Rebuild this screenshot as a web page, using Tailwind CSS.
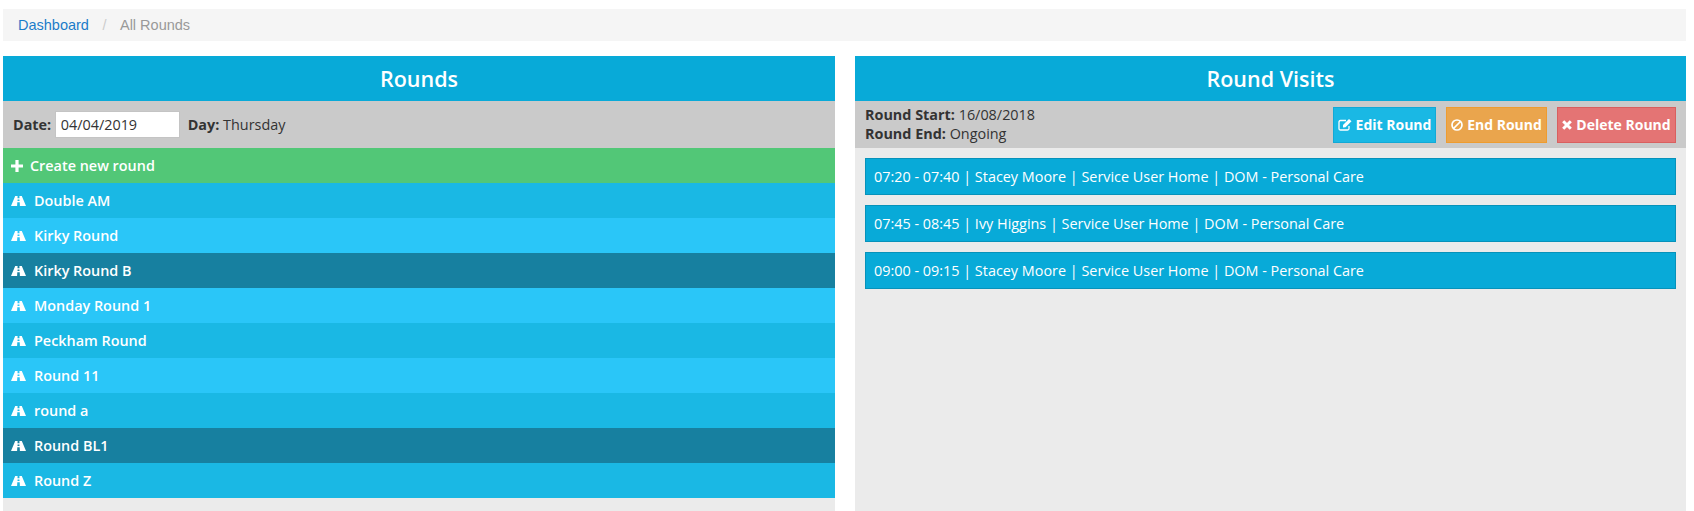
<!DOCTYPE html>
<html>
<head>
    <meta charset="utf-8">
    <title>All Rounds</title>
    <script src="https://cdn.jsdelivr.net/npm/@tailwindcss/browser@4"></script>
</head>
<body class="bg-white font-['Open_Sans',sans-serif] text-[14.4px] text-[#333]">

<svg class="hidden" xmlns="http://www.w3.org/2000/svg">
    <symbol id="road" viewBox="0 0 15 10">
        <path fill-rule="evenodd" d="M4.2 0H6.6L6.5 2.2H8.5L8.4 0H10.8L15 10H8.9L8.7 6.2H6.3L6.1 10H0ZM6.6 3.4L6.5 5H8.5L8.4 3.4Z"/>
    </symbol>
</svg>

<div class="pl-[3px] pr-[8px]">
    <div class="flex items-center mt-[9px] h-[32px] pt-[1px] px-[15px] bg-[#f5f5f5] font-['Liberation_Sans',sans-serif] text-[14.5px]">
        <a class="text-[#1b7cc9]">Dashboard</a>
        <span class="text-[#ccc] px-[13.5px]">/</span>
        <span class="text-[#999]">All Rounds</span>
    </div>

    <div class="grid grid-cols-[832px_831px] gap-x-[20px] mt-[15px]">
        <div class="bg-[#ebebeb] h-[455px]">
            <h2 class="flex items-center justify-center h-[45px] pt-[1px] bg-[#08aad8] text-white text-[21.5px] font-semibold">Rounds</h2>
            <div class="flex items-center h-[47px] bg-[#cacaca] pl-[10px]">
                <b class="font-bold mr-[3.5px]">Date:</b>
                <input class="w-[125px] h-[27px] bg-white border border-[#c4c4c4] px-[5px] text-[14.4px] text-[#333]" type="text" value="04/04/2019">
                <span class="ml-[8px]"><b class="font-bold">Day:</b> Thursday</span>
            </div>
            <div class="flex items-center h-[35px] bg-[#52c777] text-white font-semibold pl-[8px]">
                <svg class="w-[12px] h-[12px] fill-current mr-[7px]" viewBox="0 0 12 12"><path d="M4.4 0H7.6V4.4H12V7.6H7.6V12H4.4V7.6H0V4.4H4.4Z"/></svg>
                Create new round
            </div>
            <div class="flex items-center h-[35px] bg-[#1ab8e4] text-white font-semibold pl-[8px]"><svg class="w-[15px] h-[10px] fill-current mr-[8px]"><use href="#road"/></svg>Double AM</div>
            <div class="flex items-center h-[35px] bg-[#2ac6f8] text-white font-semibold pl-[8px]"><svg class="w-[15px] h-[10px] fill-current mr-[8px]"><use href="#road"/></svg>Kirky Round</div>
            <div class="flex items-center h-[35px] bg-[#1780a0] text-white font-semibold pl-[8px]"><svg class="w-[15px] h-[10px] fill-current mr-[8px]"><use href="#road"/></svg>Kirky Round B</div>
            <div class="flex items-center h-[35px] bg-[#2ac6f8] text-white font-semibold pl-[8px]"><svg class="w-[15px] h-[10px] fill-current mr-[8px]"><use href="#road"/></svg>Monday Round 1</div>
            <div class="flex items-center h-[35px] bg-[#1ab8e4] text-white font-semibold pl-[8px]"><svg class="w-[15px] h-[10px] fill-current mr-[8px]"><use href="#road"/></svg>Peckham Round</div>
            <div class="flex items-center h-[35px] bg-[#2ac6f8] text-white font-semibold pl-[8px]"><svg class="w-[15px] h-[10px] fill-current mr-[8px]"><use href="#road"/></svg>Round 11</div>
            <div class="flex items-center h-[35px] bg-[#1ab8e4] text-white font-semibold pl-[8px]"><svg class="w-[15px] h-[10px] fill-current mr-[8px]"><use href="#road"/></svg>round a</div>
            <div class="flex items-center h-[35px] bg-[#1780a0] text-white font-semibold pl-[8px]"><svg class="w-[15px] h-[10px] fill-current mr-[8px]"><use href="#road"/></svg>Round BL1</div>
            <div class="flex items-center h-[35px] bg-[#1ab8e4] text-white font-semibold pl-[8px]"><svg class="w-[15px] h-[10px] fill-current mr-[8px]"><use href="#road"/></svg>Round Z</div>
        </div>

        <div class="bg-[#ebebeb] h-[455px]">
            <h2 class="flex items-center justify-center h-[45px] pt-[1px] bg-[#08aad8] text-white text-[21.5px] font-semibold">Round Visits</h2>
            <div class="flex items-center justify-between h-[47px] bg-[#cacaca] pl-[10px] pr-[10px]">
                <div class="leading-[19px] -mt-[1px]">
                    <div><b class="font-bold">Round Start:</b> 16/08/2018</div>
                    <div><b class="font-bold">Round End:</b> Ongoing</div>
                </div>
                <div class="flex gap-x-[10px] text-[14px]">
                    <button class="flex items-center justify-center w-[103px] h-[36px] bg-[#1ab8e4] border border-[#12a9d6] text-white font-bold">
                        <svg class="w-[14px] h-[13px] mr-[4px]" viewBox="0 0 14 13" fill="none" stroke="white" stroke-width="1.3"><path d="M11 8V10.5Q11 12 9.5 12H2.5Q1 12 1 10.5V4Q1 2.5 2.5 2.5H8"/><path fill="white" stroke="none" d="M5 7L11 1L13.5 3.2L7.5 9.2L5 9.5Z"/></svg>
                        Edit Round
                    </button>
                    <button class="flex items-center justify-center w-[101px] h-[36px] bg-[#eaa54d] border border-[#ee9c30] text-white font-bold">
                        <svg class="w-[12px] h-[12px] mr-[4px]" viewBox="0 0 12 12" fill="none" stroke="white" stroke-width="1.7"><circle cx="6" cy="6" r="5"/><path d="M2.5 9.5L9.5 2.5"/></svg>
                        End Round
                    </button>
                    <button class="flex items-center justify-center w-[119px] h-[36px] bg-[#e47474] border border-[#d95f5f] text-white font-bold">
                        <svg class="w-[10px] h-[10px] mr-[4px]" viewBox="0 0 10 10" fill="none" stroke="white" stroke-width="3"><path d="M1.2 1.2L8.8 8.8M8.8 1.2L1.2 8.8"/></svg>
                        Delete Round
                    </button>
                </div>
            </div>
            <div class="flex flex-col gap-y-[10px] pt-[10px] px-[10px]">
                <div class="flex items-center h-[37px] bg-[#08aad8] border border-[#0792ba] text-white pl-[8px]">07:20 - 07:40 | Stacey Moore | Service User Home | DOM - Personal Care</div>
                <div class="flex items-center h-[37px] bg-[#08aad8] border border-[#0792ba] text-white pl-[8px]">07:45 - 08:45 | Ivy Higgins | Service User Home | DOM - Personal Care</div>
                <div class="flex items-center h-[37px] bg-[#08aad8] border border-[#0792ba] text-white pl-[8px]">09:00 - 09:15 | Stacey Moore | Service User Home | DOM - Personal Care</div>
            </div>
        </div>
    </div>
</div>

</body>
</html>
